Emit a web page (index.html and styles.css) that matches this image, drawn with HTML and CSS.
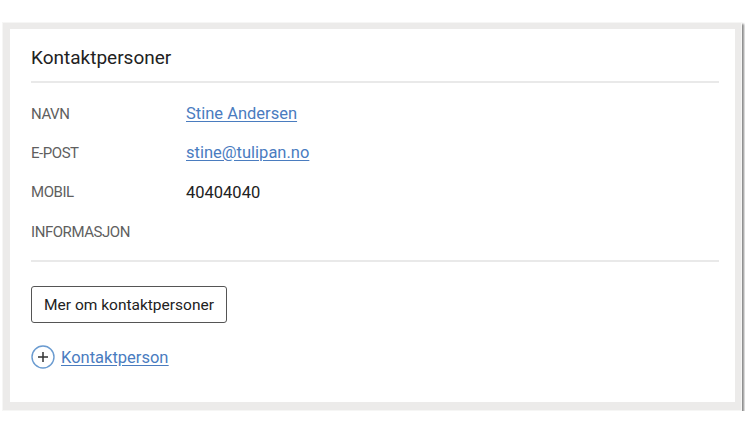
FILE: index.html
```html
<!DOCTYPE html>
<html lang="no">
<head>
<meta charset="utf-8">
<link rel="stylesheet" href="styles.css">
</head>
<body>
<div class="frame">
  <section class="card">
    <h2 class="title">Kontaktpersoner</h2>
    <dl class="rows">
      <div class="row"><dt>NAVN</dt><dd><a href="#">Stine Andersen</a></dd></div>
      <div class="row"><dt>E-POST</dt><dd><a href="#">stine@tulipan.no</a></dd></div>
      <div class="row"><dt>MOBIL</dt><dd>40404040</dd></div>
      <div class="row"><dt>INFORMASJON</dt><dd></dd></div>
    </dl>
    <div class="actions">
      <button class="btn">Mer om kontaktpersoner</button>
      <a class="add" href="#">
        <svg width="24" height="24" viewBox="0 0 24 24" aria-hidden="true"><circle cx="12" cy="12" r="11" fill="none" stroke="#6a9bd0" stroke-width="1.4"/><path d="M12 7v10M7 12h10" stroke="#333" stroke-width="1.5"/></svg>
        <span>Kontaktperson</span>
      </a>
    </div>
  </section>
</div>
</body>
</html>
```
FILE: styles.css
```css
html, body { margin: 0; padding: 0; background: #fff; }
body { font-family: Roboto, "Liberation Sans", sans-serif; padding: 22px 3px 0 2px; }
.frame {
  width: 740px; height: 389px; box-sizing: border-box;
  background: #ecebea; border: 1px solid #f6f6f5;
  padding: 6px 6px 8px 7px;
  box-shadow: 2px 2px 2px #8a8a8a;
}
.card { background: #fff; height: 100%; box-sizing: border-box; padding: 0 16px 0 21px; }
.title {
  margin: 0; font-weight: 400; font-size: 19px; color: #222;
  padding: 18px 0 12px; border-bottom: 2px solid #e9e9e9; line-height: 22px;
}
.rows { margin: 0; padding: 11px 0 9px; border-bottom: 2px solid #e9e9e9; }
.row { display: flex; height: 39.33px; align-items: center; }
dt { width: 155px; font-size: 15px; letter-spacing: -0.45px; color: #5f5f5f; }
dd { margin: 0; font-size: 16.5px; color: #222; }
dd a { color: #4a7cbf; text-decoration: underline; text-underline-offset: 2px; }
.actions { padding-top: 24px; display: flex; flex-direction: column; align-items: flex-start; gap: 22px; }
.btn {
  font-family: inherit; font-size: 15.5px; color: #222; background: #fff;
  border: 1.5px solid #555; border-radius: 3px; height: 37px; width: 196px; padding: 0;
}
.add { display: flex; align-items: center; gap: 6px; color: #4a7cbf; font-size: 16.5px; text-underline-offset: 2px; }
.add span { text-decoration: underline; }
.add svg { display: block; }
```
